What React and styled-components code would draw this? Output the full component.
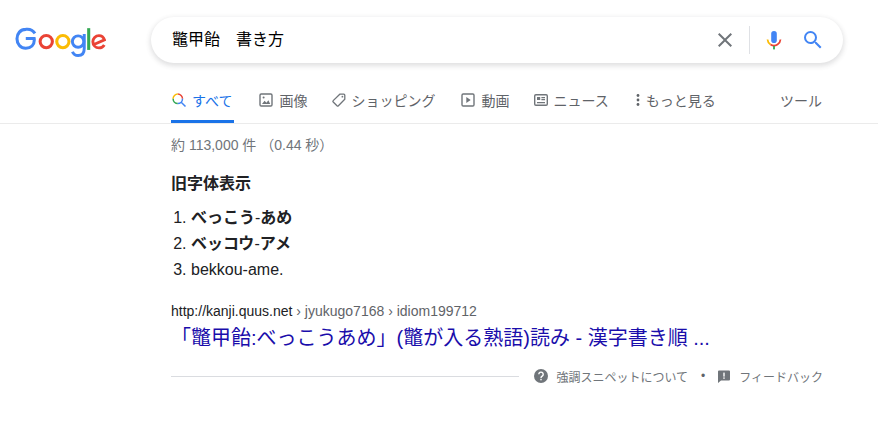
import React from "react";
import styled, { createGlobalStyle } from "styled-components";

const Global = createGlobalStyle`
  html, body { margin: 0; padding: 0; background: #fff; }
  body { font-family: "Liberation Sans", "Noto Sans CJK JP", sans-serif; color: #202124; }
`;

const Page = styled.div`
  width: 878px;
  height: 422px;
  overflow: hidden;
`;

const Masthead = styled.header`
  display: flex;
  align-items: flex-start;
  height: 63px;
  padding: 17px 0 0 15px;
  box-sizing: border-box;
`;

const LogoSvg = styled.svg`
  display: block;
  width: 91px;
  height: 32px;
  margin: 10px 45px 0 0;
  flex: none;
`;

const SearchBox = styled.div`
  display: flex;
  align-items: center;
  width: 692px;
  height: 46px;
  box-sizing: border-box;
  padding: 0 18px 0 21px;
  border-radius: 23px;
  background: #fff;
  box-shadow: 0 2px 5px 1px rgba(64, 60, 67, 0.16);
`;

const Query = styled.div`
  flex: 1;
  font-size: 16px;
  line-height: 44px;
  color: #000;
  white-space: pre;
`;

const Divider = styled.span`
  width: 1px;
  height: 28px;
  background: #dfe1e5;
  margin: 0 12px 0 12px;
`;

const IconSvg = styled.svg`
  display: block;
  flex: none;
  margin-right: ${(p) => p.$mr || 0}px;
`;

const TabBar = styled.nav`
  display: flex;
  align-items: flex-start;
  height: 61px;
  box-sizing: border-box;
  padding: 0 0 0 171px;
  border-bottom: 1px solid #ebebeb;
`;

const Tab = styled.div`
  display: flex;
  align-items: center;
  height: 60px;
  box-sizing: border-box;
  padding-top: 17px;
  padding-right: ${(p) => (p.$active ? 2 : 0)}px;
  margin-right: ${(p) => p.$mr}px;
  font-size: 14px;
  color: ${(p) => (p.$active ? "#1a73e8" : "#5f6368")};
  border-bottom: 3px solid ${(p) => (p.$active ? "#1a73e8" : "transparent")};
  white-space: nowrap;
`;

const Tools = styled(Tab)`
  margin: 0 0 0 auto;
  padding-right: 56px;
`;

const Results = styled.main`
  width: 653px;
  margin-left: 171px;
`;

const Stats = styled.div`
  font-size: 14px;
  line-height: 20px;
  color: #70757a;
  padding-top: 11px;
  white-space: pre;
`;

const Heading = styled.h3`
  margin: 18px 0 0;
  font-size: 16px;
  line-height: 22px;
  font-weight: 700;
  color: #202124;
`;

const List = styled.ol`
  margin: 10px 0 0;
  padding: 0 0 0 20px;
  font-size: 16px;
  line-height: 26px;
  color: #202124;
`;

const Crumb = styled.div`
  margin-top: 18px;
  font-size: 14px;
  line-height: 20px;
  color: #5f6368;
  white-space: nowrap;
`;

const Site = styled.span`
  color: #202124;
`;

const Title = styled.a`
  display: block;
  font-size: 20px;
  line-height: 26px;
  color: #1a0dab;
  white-space: nowrap;
  margin-top: 4px;
`;

const FootRow = styled.div`
  display: flex;
  align-items: center;
  margin-top: 16px;
  padding-right: 1px;
  height: 18px;
  font-size: 12px;
  color: #70757a;
  white-space: pre;
`;

const Rule = styled.span`
  flex: 1;
  height: 1px;
  background: #dadce0;
  margin-right: 14px;
`;

const Dot = styled.span`
  margin: 0 11px 0 13px;
  color: #5f6368;
`;

const Logo = () => (
  <LogoSvg viewBox="0 0 92 32" role="img" aria-label="Google" fill="none">
    <path d="M20.2 6.2A9.6 9.6 0 0 0 10.9 2.2C5.5 2.2 2 6.5 2 11.7s3.6 9.6 8.9 9.6c5.3 0 8.6-3.4 8.6-8.3 0-.6 0-1-.1-1.5H10.9" stroke="#4285f4" strokeWidth="3.1" />
    <circle cx="31.6" cy="14.6" r="6.2" stroke="#ea4335" strokeWidth="3.1" />
    <circle cx="48.4" cy="14.6" r="6.2" stroke="#fbbc05" strokeWidth="3.1" />
    <circle cx="63.8" cy="14.6" r="5.8" stroke="#4285f4" strokeWidth="3" />
    <path d="M70 7v14.5c0 5-2.6 7.2-6.2 7.2-2.7 0-4.8-1.6-5.7-3.9" stroke="#4285f4" strokeWidth="3" />
    <path d="M74.5 1v22" stroke="#34a853" strokeWidth="3.1" />
    <path d="M79.2 17.8l11.3-4.9c-.9-2.6-3.1-4.4-5.6-4.4-3.5 0-6.2 2.8-6.2 6.2 0 3.5 2.7 6.2 6.2 6.2 2.4 0 4.3-1.2 5.4-3" stroke="#ea4335" strokeWidth="2.9" />
  </LogoSvg>
);

const Clear = () => (
  <IconSvg width="24" height="24" viewBox="0 0 24 24" fill="#70757a">
    <path d="M19 6.41L17.59 5 12 10.59 6.41 5 5 6.41 10.59 12 5 17.59 6.41 19 12 13.41 17.59 19 19 17.59 13.41 12z" />
  </IconSvg>
);

const Mic = () => (
  <IconSvg width="24" height="24" viewBox="0 0 24 24" fill="none" $mr="15">
    <rect x="9.2" y="3" width="5.6" height="12" rx="2.8" fill="#4285f4" />
    <path d="M5.5 11.5a6.5 6.5 0 0 0 3 5" stroke="#fbbc05" strokeWidth="1.8" />
    <path d="M8.5 16.5a6.5 6.5 0 0 0 7 0 6.5 6.5 0 0 0 3-5" stroke="#ea4335" strokeWidth="1.8" />
    <rect x="11.1" y="18" width="1.8" height="3.4" fill="#34a853" />
  </IconSvg>
);

const BlueSearch = () => (
  <IconSvg width="24" height="24" viewBox="0 0 24 24" fill="#4285f4">
    <path d="M15.5 14h-.79l-.28-.27A6.47 6.47 0 0 0 16 9.5 6.5 6.5 0 1 0 9.5 16c1.61 0 3.09-.59 4.23-1.57l.27.28v.79l5 4.99L20.49 19l-4.99-5zm-6 0C7.01 14 5 11.99 5 9.5S7.01 5 9.5 5 14 7.01 14 9.5 11.99 14 9.5 14z" />
  </IconSvg>
);

const AllIcon = () => (
  <IconSvg width="16" height="16" viewBox="0 0 16 16" fill="none" $mr="5">
    <path d="M6.8 2.1a4.7 4.7 0 0 1 4.7 4.7" stroke="#ea4335" strokeWidth="1.5" />
    <path d="M2.1 6.8a4.7 4.7 0 0 1 4.7-4.7" stroke="#fbbc05" strokeWidth="1.5" />
    <path d="M6.8 11.5a4.7 4.7 0 0 1-4.7-4.7" stroke="#34a853" strokeWidth="1.5" />
    <path d="M11.5 6.8a4.7 4.7 0 0 1-4.7 4.7M10.2 10.2l4.3 4.3" stroke="#4285f4" strokeWidth="1.5" />
  </IconSvg>
);

const ImageIcon = () => (
  <IconSvg width="16" height="16" viewBox="0 0 16 16" fill="none" $mr="5">
    <rect x="2" y="2" width="12" height="12" rx="1.2" stroke="#70757a" strokeWidth="1.4" />
    <path d="M4 12l2.6-3.2 1.8 2 2-2.6L12.2 12z" fill="#70757a" />
    <circle cx="5.6" cy="5.6" r="1" fill="#70757a" />
  </IconSvg>
);

const TagIcon = () => (
  <IconSvg width="16" height="16" viewBox="0 0 16 16" fill="none" $mr="4">
    <path d="M8.8 2.2h4a1 1 0 0 1 1 1v4L7.4 13.8a1 1 0 0 1-1.4 0L2.2 10a1 1 0 0 1 0-1.4z" stroke="#70757a" strokeWidth="1.3" />
    <circle cx="11.4" cy="4.7" r="0.9" fill="#70757a" />
  </IconSvg>
);

const VideoIcon = () => (
  <IconSvg width="16" height="16" viewBox="0 0 16 16" fill="none" $mr="5">
    <rect x="2" y="2" width="12" height="12" rx="1.2" stroke="#70757a" strokeWidth="1.4" />
    <path d="M6.3 5l4.4 3-4.4 3z" fill="#70757a" />
  </IconSvg>
);

const NewsIcon = () => (
  <IconSvg width="16" height="16" viewBox="0 0 16 16" fill="none" $mr="4">
    <rect x="1.7" y="2.7" width="12.6" height="10.6" rx="1.2" stroke="#70757a" strokeWidth="1.4" />
    <rect x="4" y="5" width="3.2" height="3" fill="#70757a" />
    <path d="M8.4 5.6H12M8.4 7.6H12M4 10.6h8" stroke="#70757a" strokeWidth="1.2" />
  </IconSvg>
);

const MoreIcon = () => (
  <IconSvg width="6" height="16" viewBox="0 0 6 16" fill="#5f6368" $mr="5">
    <circle cx="3" cy="3.5" r="1.4" />
    <circle cx="3" cy="8" r="1.4" />
    <circle cx="3" cy="12.5" r="1.4" />
  </IconSvg>
);

const HelpIcon = () => (
  <IconSvg width="16" height="16" viewBox="0 0 16 16" $mr="7">
    <circle cx="8" cy="8" r="7" fill="#70757a" />
    <path d="M5.8 6.3a2.2 2.2 0 1 1 3.4 1.9c-.8.5-1.2.9-1.2 1.8" fill="none" stroke="#fff" strokeWidth="1.4" />
    <rect x="7.3" y="10.8" width="1.4" height="1.5" fill="#fff" />
  </IconSvg>
);

const FeedbackIcon = () => (
  <IconSvg width="16" height="16" viewBox="0 0 16 16" $mr="7">
    <path d="M3 2.5h10a1 1 0 0 1 1 1v8a1 1 0 0 1-1 1H5l-3 2.6V3.5a1 1 0 0 1 1-1z" fill="#70757a" />
    <rect x="7.3" y="4.6" width="1.4" height="4" fill="#fff" />
    <rect x="7.3" y="9.4" width="1.4" height="1.4" fill="#fff" />
  </IconSvg>
);

export default function App() {
  return (
    <Page>
      <Global />
      <Masthead>
        <Logo />
        <SearchBox>
          <Query>鼈甲飴　書き方</Query>
          <Clear />
          <Divider />
          <Mic />
          <BlueSearch />
        </SearchBox>
      </Masthead>
      <TabBar>
        <Tab $active $mr="24"><AllIcon />すべて</Tab>
        <Tab $mr="24"><ImageIcon />画像</Tab>
        <Tab $mr="25"><TagIcon />ショッピング</Tab>
        <Tab $mr="24"><VideoIcon />動画</Tab>
        <Tab $mr="26"><NewsIcon />ニュース</Tab>
        <Tab $mr="0"><MoreIcon />もっと見る</Tab>
        <Tools $mr="0">ツール</Tools>
      </TabBar>
      <Results>
        <Stats>約 113,000 件 （0.44 秒）</Stats>
        <Heading>旧字体表示</Heading>
        <List>
          <li><b>べっこう</b>-<b>あめ</b></li>
          <li><b>ベッコウ</b>-<b>アメ</b></li>
          <li>bekkou-ame.</li>
        </List>
        <Crumb><Site>http://kanji.quus.net</Site> › jyukugo7168 › idiom199712</Crumb>
        <Title>「鼈甲飴:べっこうあめ」(鼈が入る熟語)読み - 漢字書き順 ...</Title>
        <FootRow>
          <Rule />
          <HelpIcon />強調スニペットについて<Dot>•</Dot><FeedbackIcon />フィードバック
        </FootRow>
      </Results>
    </Page>
  );
}
